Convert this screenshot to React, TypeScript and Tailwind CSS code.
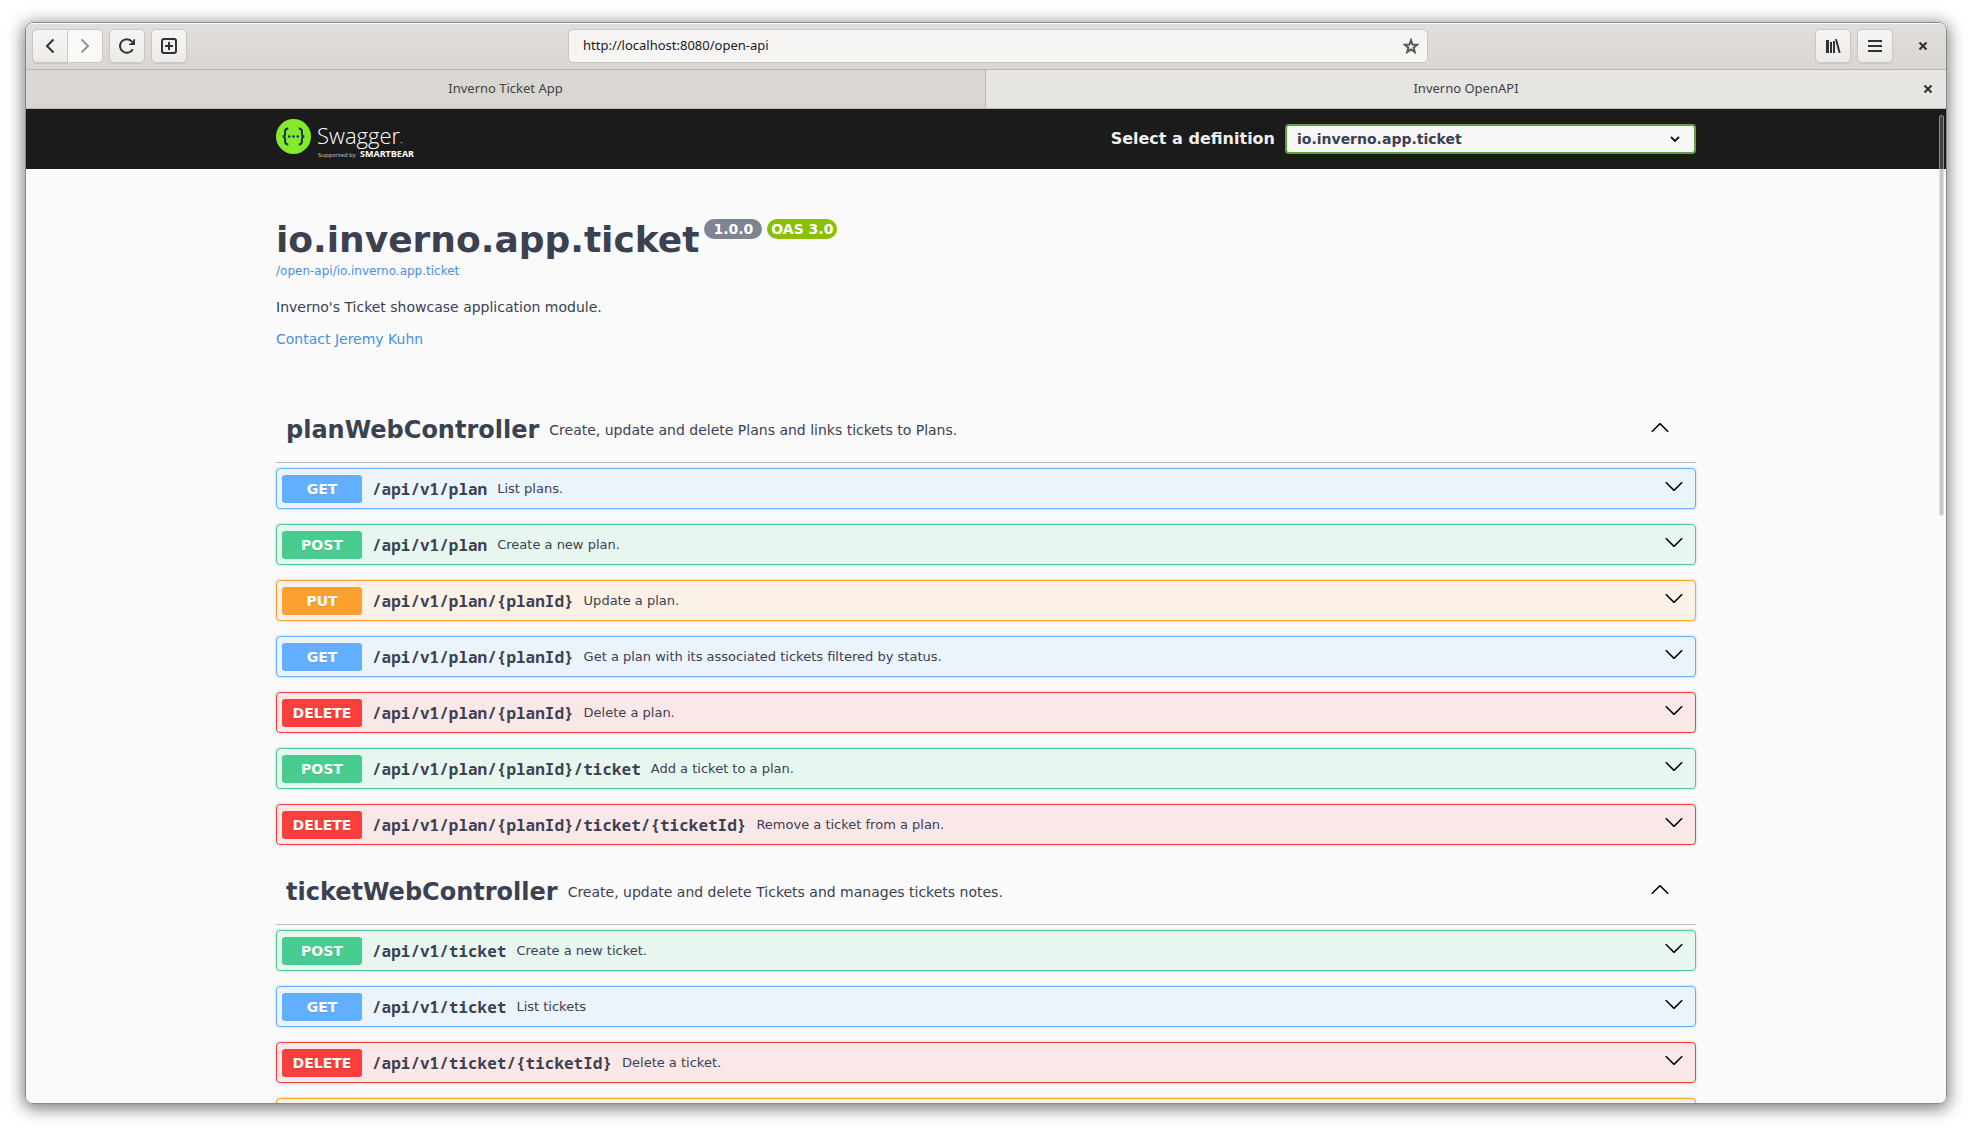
const UI = "font-['Noto_Sans',sans-serif]";

type Method = "GET" | "POST" | "PUT" | "DELETE";

type Operation = {
  method: Method;
  path: string;
  summary: string;
};

type Tag = {
  name: string;
  description: string;
  operations: Operation[];
};

const tags: Tag[] = [
  {
    name: "planWebController",
    description: "Create, update and delete Plans and links tickets to Plans.",
    operations: [
      { method: "GET", path: "/api/v1/plan", summary: "List plans." },
      { method: "POST", path: "/api/v1/plan", summary: "Create a new plan." },
      { method: "PUT", path: "/api/v1/plan/{planId}", summary: "Update a plan." },
      {
        method: "GET",
        path: "/api/v1/plan/{planId}",
        summary: "Get a plan with its associated tickets filtered by status.",
      },
      { method: "DELETE", path: "/api/v1/plan/{planId}", summary: "Delete a plan." },
      {
        method: "POST",
        path: "/api/v1/plan/{planId}/ticket",
        summary: "Add a ticket to a plan.",
      },
      {
        method: "DELETE",
        path: "/api/v1/plan/{planId}/ticket/{ticketId}",
        summary: "Remove a ticket from a plan.",
      },
    ],
  },
  {
    name: "ticketWebController",
    description: "Create, update and delete Tickets and manages tickets notes.",
    operations: [
      { method: "POST", path: "/api/v1/ticket", summary: "Create a new ticket." },
      { method: "GET", path: "/api/v1/ticket", summary: "List tickets" },
      { method: "DELETE", path: "/api/v1/ticket/{ticketId}", summary: "Delete a ticket." },
      { method: "PUT", path: "/api/v1/ticket/{ticketId}", summary: "Update a ticket." },
    ],
  },
];

const methodStyles: Record<Method, { row: string; badge: string }> = {
  GET: { row: "border-[#61affe] bg-[#ebf3fb]", badge: "bg-[#61affe]" },
  POST: { row: "border-[#49cc90] bg-[#e8f6f0]", badge: "bg-[#49cc90]" },
  PUT: { row: "border-[#fca130] bg-[#fbf1e6]", badge: "bg-[#fca130]" },
  DELETE: { row: "border-[#f93e3e] bg-[#fae7e7]", badge: "bg-[#f93e3e]" },
};

const Arrow = ({ up = false }: { up?: boolean }) => (
  <svg
    viewBox="0 0 20 20"
    className={`h-5 w-5 shrink-0 ${up ? "mb-1 rotate-180" : "mb-1.5"}`}
    aria-hidden="true"
  >
    <path d="M17.418 6.109c.272-.268.709-.268.979 0s.271.701 0 .969l-7.908 7.83c-.27.268-.707.268-.979 0l-7.908-7.83c-.27-.268-.27-.701 0-.969s.709-.268.979 0L10 13.25z" />
  </svg>
);

const CloseIcon = () => (
  <svg viewBox="0 0 16 16" className="h-4 w-4" aria-hidden="true">
    <path d="M4.5 4.5l7 7M11.5 4.5l-7 7" stroke="#2e3436" strokeWidth="2.2" fill="none" />
  </svg>
);

const toolButton =
  "flex h-[34px] items-center justify-center border border-[#cdc7c2] bg-linear-to-b from-[#f6f5f4] to-[#edebe9] shadow-[0_1px_1px_rgba(0,0,0,0.08)]";

const HeaderBar = () => (
  <header className="flex items-center justify-between border-b border-[#bab7b2] bg-linear-to-b from-[#e1dedb] to-[#dad6d2] p-1.5 shadow-[inset_0_1px_#f9f8f8]">
    <div className="flex shrink-0 gap-1.5">
      <div className="flex">
        <button aria-label="Back" className={`${toolButton} w-9 rounded-l-[5px]`}>
          <svg viewBox="0 0 16 16" className="h-4 w-4" aria-hidden="true">
            <path d="M11.5 1.5L5 8l6.5 6.5" stroke="#2e3436" strokeWidth="2" fill="none" />
          </svg>
        </button>
        <button
          aria-label="Forward"
          className="flex h-[34px] w-[35px] items-center justify-center rounded-r-[5px] border border-l-0 border-[#cdc7c2] bg-[#faf9f8]"
        >
          <svg viewBox="0 0 16 16" className="h-4 w-4" aria-hidden="true">
            <path d="M4.5 1.5L11 8l-6.5 6.5" stroke="#929595" strokeWidth="2" fill="none" />
          </svg>
        </button>
      </div>
      <button aria-label="Reload" className={`${toolButton} w-9 rounded-[5px]`}>
        <svg viewBox="0 0 16 16" className="h-4 w-4" aria-hidden="true">
          <path
            d="M13.8 11.2A6.8 6.8 0 1 1 13 3.6"
            stroke="#2e3436"
            strokeWidth="2"
            fill="none"
          />
          <path d="M16 1v6h-6V6l1.6-.6L14.6 2 15 1z" fill="#2e3436" />
        </svg>
      </button>
      <button aria-label="New tab" className={`${toolButton} w-9 rounded-[5px]`}>
        <svg viewBox="0 0 16 16" className="h-4 w-4" aria-hidden="true">
          <rect x="1" y="1" width="14" height="14" rx="2" stroke="#2e3436" strokeWidth="2" fill="none" />
          <path d="M8 4v8M4 8h8" stroke="#2e3436" strokeWidth="2" />
        </svg>
      </button>
    </div>
    <div className="flex h-[34px] w-full max-w-[860px] items-center rounded-[5px] border border-[#cdc7c2] bg-[#f6f5f3] px-2">
      <input
        aria-label="Address"
        defaultValue="http://localhost:8080/open-api"
        className="min-w-0 flex-1 bg-transparent px-1.5 text-[13px] text-[#1a1a1a] outline-none"
      />
      <button aria-label="Bookmark">
        <svg viewBox="0 0 16 16" className="h-4 w-4" aria-hidden="true">
          <path
            d="M8 2.2l1.6 4.3 4.6.2-3.6 2.9 1.2 4.5L8 11.5l-3.8 2.6 1.2-4.5-3.6-2.9 4.6-.2z"
            stroke="#555a5b"
            strokeWidth="2"
            fill="none"
          />
        </svg>
      </button>
    </div>
    <div className="flex shrink-0 items-center gap-1.5 pl-1.5">
      <button aria-label="Library" className={`${toolButton} w-9 rounded-[5px]`}>
        <svg viewBox="0 0 16 16" className="h-4 w-4" aria-hidden="true">
          <path d="M1 2h3v13H1zM5 4h2v11H5zM8 3h2v12H8zM10 1.3L12 1l3.6 13.7-2 .3z" fill="#2e3436" />
        </svg>
      </button>
      <button aria-label="Menu" className={`${toolButton} w-9 rounded-[5px]`}>
        <svg viewBox="0 0 16 16" className="h-4 w-4" aria-hidden="true">
          <path d="M1 2h14v2H1zM1 7h14v2H1zM1 12h14v2H1z" fill="#2e3436" />
        </svg>
      </button>
      <button aria-label="Close window" className="ml-[7px] flex h-[34px] w-[34px] items-center justify-center">
        <CloseIcon />
      </button>
    </div>
  </header>
);

const TabBar = () => (
  <nav className="flex h-[39px] border-b border-[#bab7b2] bg-[#dad7d2] text-[13px] text-[#3d4345]">
    <button className="w-1/2 border-r border-[#bab7b2]">Inverno Ticket App</button>
    <div className="relative flex w-1/2 bg-[#e6e5e1]">
      <button className="flex-1">Inverno OpenAPI</button>
      <button aria-label="Close tab" className="absolute inset-y-0 right-2.5">
        <CloseIcon />
      </button>
    </div>
  </nav>
);

const Logo = () => (
  <a href="#" className="flex" aria-label="Swagger">
    <svg viewBox="0 0 142 40" className="h-10 w-[142px]" aria-hidden="true">
      <circle cx="17.5" cy="17.5" r="17.5" fill="#85ea2d" />
      <g fill="none" stroke="#173647" strokeWidth="2">
        <path d="M12.3 9.6c-2.4 0-3.2.7-3.2 2.6v2.6c0 1.8-.7 2.6-2.4 2.7 1.7.1 2.4.9 2.4 2.7v2.6c0 1.9.8 2.6 3.2 2.6" />
        <path d="M22.7 9.6c2.4 0 3.2.7 3.2 2.6v2.6c0 1.8.7 2.6 2.4 2.7-1.7.1-2.4.9-2.4 2.7v2.6c0 1.9-.8 2.6-3.2 2.6" />
      </g>
      <g fill="#173647">
        <circle cx="13.2" cy="17.5" r="1.3" />
        <circle cx="17.5" cy="17.5" r="1.3" />
        <circle cx="21.8" cy="17.5" r="1.3" />
      </g>
      <g className="font-['Open_Sans',sans-serif]">
        <text x="41" y="25" fill="#fff" fontSize="22" fontWeight="300">
          Swagger
        </text>
        <text x="124" y="26" fill="#aaa" fontSize="4">
          ™
        </text>
        <text x="42" y="38" fill="#ccc" fontSize="6">
          Supported by
        </text>
        <text x="84" y="38" fill="#fff" fontSize="9" fontWeight="700">
          SMARTBEAR
        </text>
      </g>
    </svg>
  </a>
);

const TopBar = () => (
  <div className="bg-[#1b1b1b] py-2.5">
    <div className="mx-auto flex w-full max-w-[1460px] items-center justify-between px-5">
      <Logo />
      <label className="flex items-center gap-2.5 font-bold text-[#f0f0f0]">
        Select a definition
        <span className="relative flex">
          <select className="h-[30px] w-[411px] appearance-none rounded border-2 border-[#62a03f] bg-[#f7f7f7] px-2.5 text-sm font-bold text-[#3b4151]">
            <option>io.inverno.app.ticket</option>
          </select>
          <svg
            viewBox="0 0 10 6"
            className="pointer-events-none absolute inset-y-0 right-4 my-auto h-1.5 w-2.5"
            aria-hidden="true"
          >
            <path d="M1 1l4 4 4-4" stroke="#111" strokeWidth="1.8" fill="none" />
          </svg>
        </span>
      </label>
    </div>
  </div>
);

const Info = () => (
  <section className="mt-[50px] mb-[47px]">
    <div className="flex items-start gap-[5px]">
      <h1 className="text-[36px] leading-[42px] font-bold">io.inverno.app.ticket</h1>
      <span className="rounded-full bg-[#7d8492] px-[9px] text-sm leading-5 font-bold text-white">
        1.0.0
      </span>
      <span className="rounded-full bg-[#89bf04] px-1 text-sm leading-5 font-bold text-white">
        OAS 3.0
      </span>
    </div>
    <a href="#" className="block text-xs leading-5 text-[#4990e2]">
      /open-api/io.inverno.app.ticket
    </a>
    <p className="mt-4 text-sm">Inverno's Ticket showcase application module.</p>
    <a href="#" className="mt-3 inline-block text-sm text-[#4990e2]">
      Contact Jeremy Kuhn
    </a>
  </section>
);

const OperationRow = ({ operation }: { operation: Operation }) => {
  const style = methodStyles[operation.method];
  return (
    <button
      className={`flex h-[41px] w-full items-center rounded border pr-[11px] pl-[5px] text-left shadow-[0_0_3px_rgba(0,0,0,0.19)] ${style.row}`}
    >
      <span
        className={`w-20 rounded-[3px] text-center text-sm leading-7 font-bold text-white [text-shadow:0_1px_0_rgba(0,0,0,0.1)] ${style.badge}`}
      >
        {operation.method}
      </span>
      <span className="px-2.5 font-['Noto_Sans_Mono','DejaVu_Sans_Mono',monospace] text-base font-bold">
        {operation.path}
      </span>
      <span className="flex-1 text-[13px]">{operation.summary}</span>
      <Arrow />
    </button>
  );
};

const TagSection = ({ tag }: { tag: Tag }) => (
  <section>
    <button className="mb-[5px] flex h-[65px] w-full items-center border-b border-[#3b4151]/35 pr-[26px] pl-2.5 text-left">
      <h3 className="text-2xl font-bold">{tag.name}</h3>
      <span className="flex-1 px-2.5 text-sm">{tag.description}</span>
      <Arrow up />
    </button>
    <div className="flex flex-col gap-[15px] pb-[15px]">
      {tag.operations.map((operation, index) => (
        <OperationRow key={index} operation={operation} />
      ))}
    </div>
  </section>
);

const App = () => {
  return (
    <div className={`h-screen bg-white px-[25px] pt-[22px] pb-7 ${UI}`}>
      <div className="flex h-full flex-col overflow-hidden rounded-lg border border-[#8a8a88] shadow-[0_3px_16px_2px_rgba(0,0,0,0.5)]">
        <HeaderBar />
        <TabBar />
        <div className="relative flex min-h-0 flex-1">
          <main className="flex-1 overflow-y-auto bg-[#fafafa] font-['DejaVu_Sans',sans-serif] text-[#3b4151] [scrollbar-width:none]">
            <TopBar />
            <div className="mx-auto w-full max-w-[1460px] px-5">
              <Info />
              {tags.map((tag) => (
                <TagSection key={tag.name} tag={tag} />
              ))}
            </div>
          </main>
          {/* Overlay scrollbar */}
          <div className="absolute top-1.5 right-0.5 h-[401px] w-[5px] rounded-full border border-white/40 bg-[#7d7d7d]/40" />
        </div>
      </div>
    </div>
  );
};

export default App;
